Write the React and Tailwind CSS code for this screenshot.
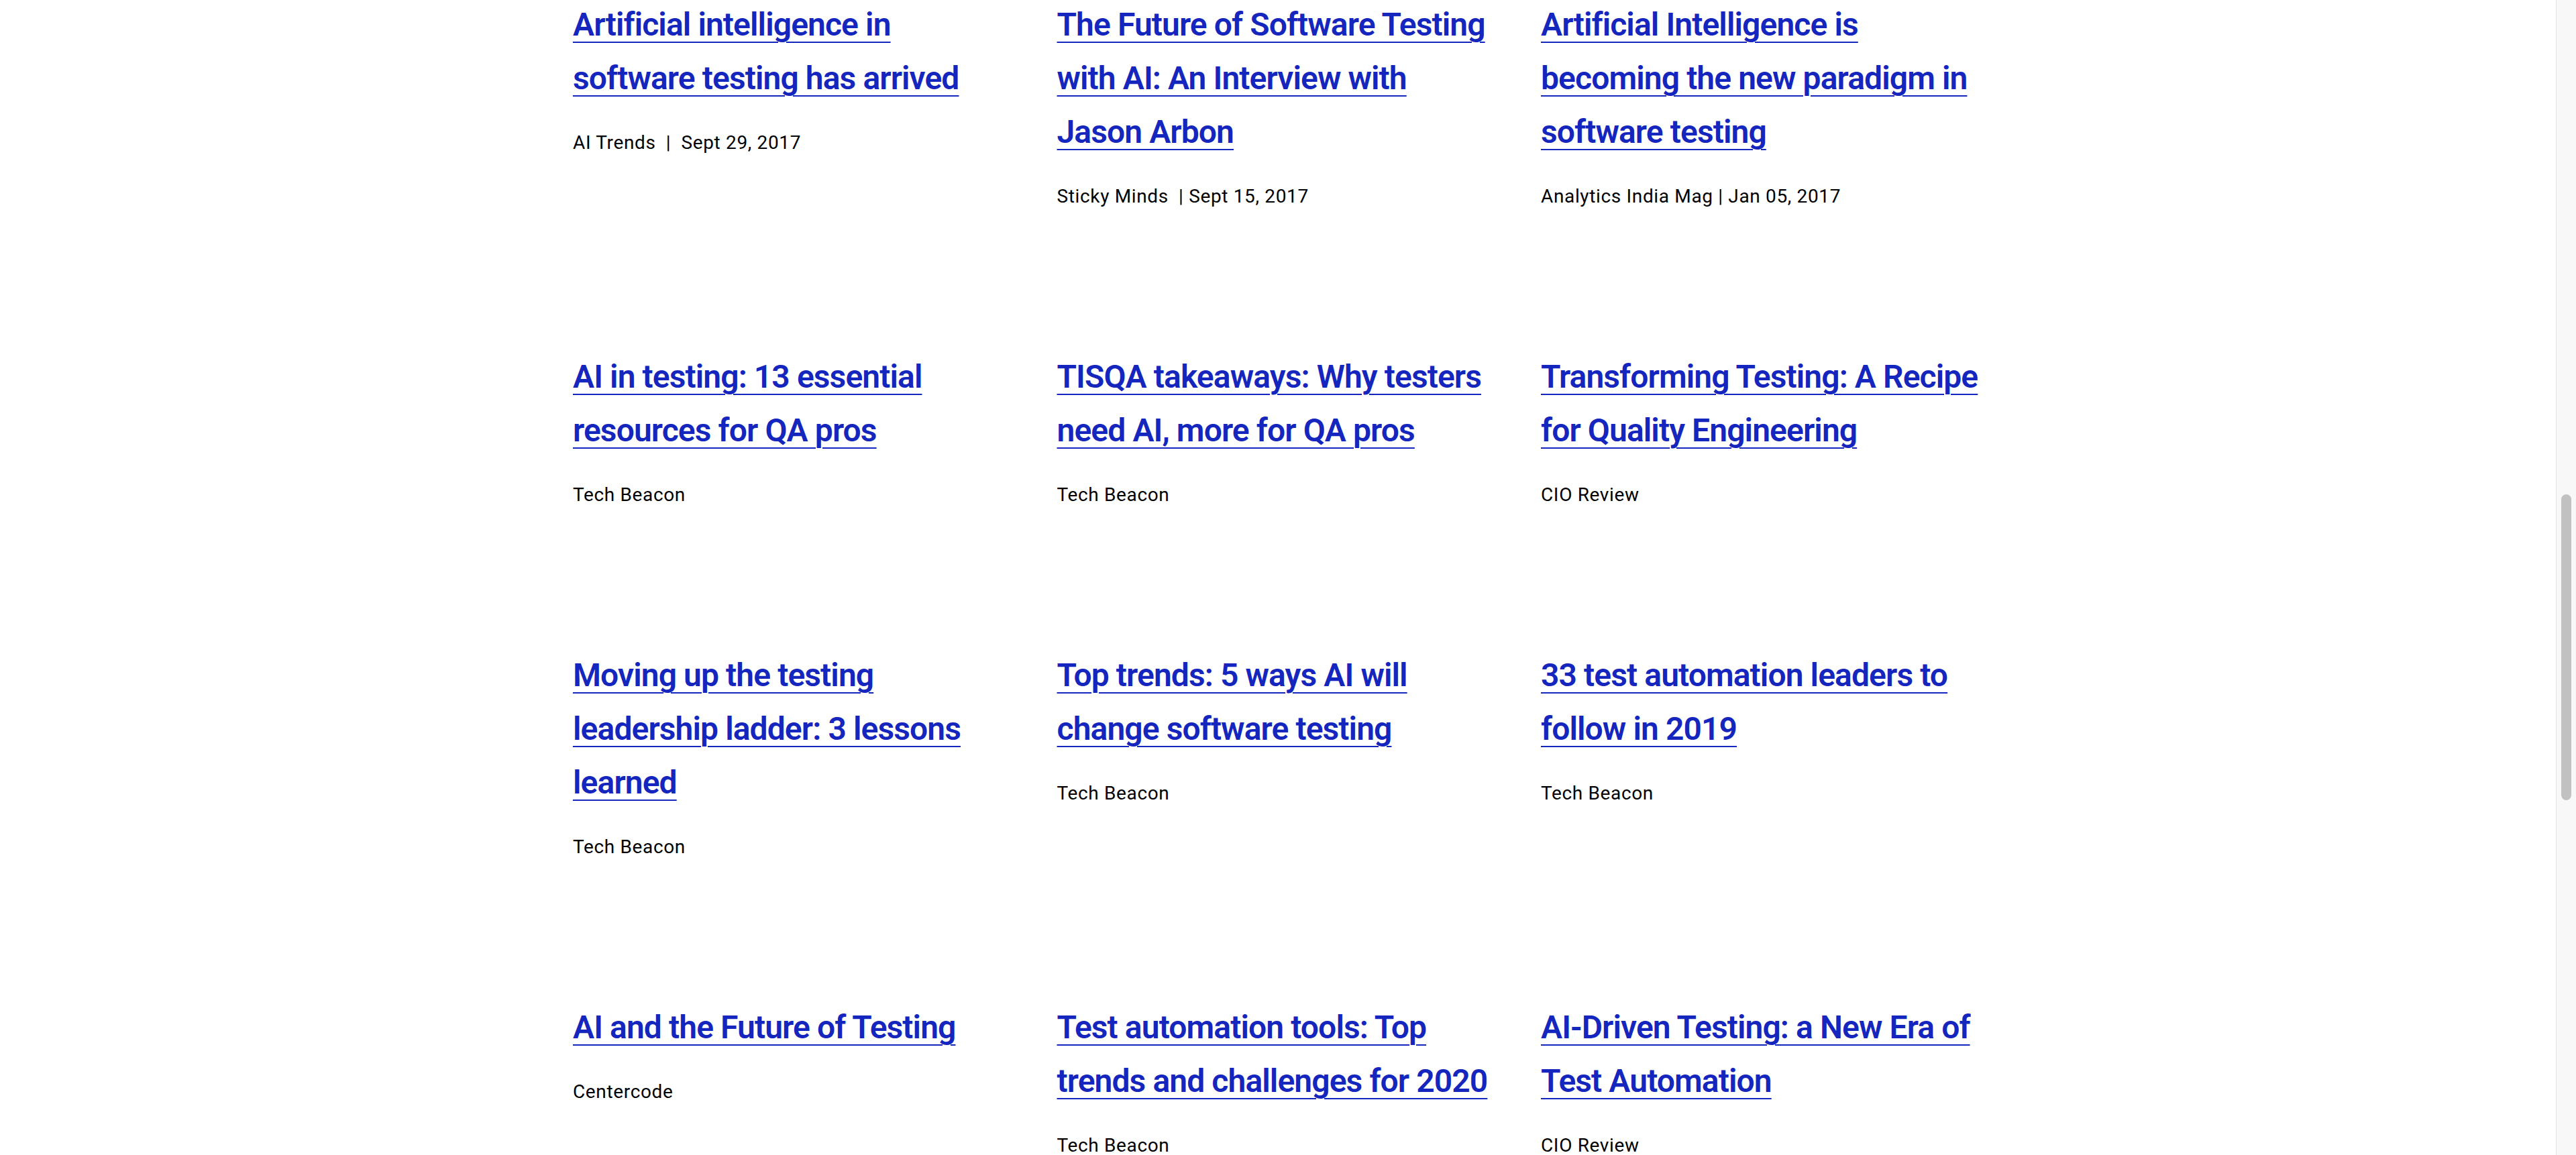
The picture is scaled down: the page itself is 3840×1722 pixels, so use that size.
const articles = [
  { title: ["Artificial intelligence in", "software testing has arrived"], meta: "AI Trends  |  Sept 29, 2017" },
  { title: ["The Future of Software Testing", "with AI: An Interview with", "Jason Arbon"], meta: "Sticky Minds  | Sept 15, 2017" },
  { title: ["Artificial Intelligence is", "becoming the new paradigm in", "software testing"], meta: "Analytics India Mag | Jan 05, 2017" },
  { title: ["AI in testing: 13 essential", "resources for QA pros"], meta: "Tech Beacon" },
  { title: ["TISQA takeaways: Why testers", "need AI, more for QA pros"], meta: "Tech Beacon" },
  { title: ["Transforming Testing: A Recipe", "for Quality Engineering"], meta: "CIO Review" },
  { title: ["Moving up the testing", "leadership ladder: 3 lessons", "learned"], meta: "Tech Beacon" },
  { title: ["Top trends: 5 ways AI will", "change software testing"], meta: "Tech Beacon" },
  { title: ["33 test automation leaders to", "follow in 2019"], meta: "Tech Beacon" },
  { title: ["AI and the Future of Testing"], meta: "Centercode" },
  { title: ["Test automation tools: Top", "trends and challenges for 2020"], meta: "Tech Beacon" },
  { title: ["AI-Driven Testing: a New Era of", "Test Automation"], meta: "CIO Review" },
];

function ArticleCard({ title, meta }) {
  return (
    <div className="flex flex-col">
      <a
        href="#"
        className="text-[48px] leading-[80px] font-semibold tracking-[-0.9px] text-[#1426bd] underline decoration-2 underline-offset-[9px] whitespace-nowrap"
      >
        {title.map((line, i) => (
          <span key={i}>
            {line}
            {i < title.length - 1 && <br />}
          </span>
        ))}
      </a>
      <p className="mt-9 text-[28px] leading-[40px] tracking-[0.65px] text-black whitespace-pre">{meta}</p>
    </div>
  );
}

export default function App() {
  return (
    <div
      className="flex w-full h-[1722px] overflow-hidden bg-white"
      style={{ fontFamily: "Roboto, 'Noto Sans', sans-serif" }}
    >
      <main className="flex-1 pl-[854px] -mt-[3px]">
        <div className="grid grid-cols-[721.5px_721.5px_721.5px] gap-y-[209px] items-start">
          {articles.map((a, i) => (
            <ArticleCard key={i} title={a.title} meta={a.meta} />
          ))}
        </div>
      </main>
      <div className="w-[30px] h-full bg-[#f8f8f8] border-l border-[#e3e3e3] flex flex-col items-center">
        <div className="mt-[737px] h-[456px] w-[15px] rounded-full bg-[#c1c1c1]" />
      </div>
    </div>
  );
}
